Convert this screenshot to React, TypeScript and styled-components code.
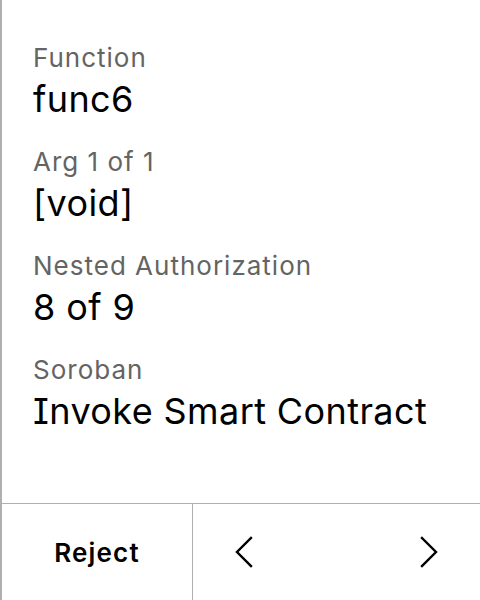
import React from "react";
import styled, { createGlobalStyle } from "styled-components";

const Global = createGlobalStyle`
  html, body { margin: 0; padding: 0; background: #fff; }
  body { font-family: Inter, "Noto Sans", sans-serif; font-feature-settings: "cv08" 1; }
`;

const Screen = styled.div`
  width: 480px;
  height: 600px;
  box-sizing: border-box;
  border-left: 2px solid #b0b0b0;
  display: flex;
  flex-direction: column;
  background: #fff;
`;

const Content = styled.div`
  flex: 1;
  padding: 42px 0 0 31px;
  display: flex;
  flex-direction: column;
`;

const Pair = styled.div`
  display: flex;
  flex-direction: column;
  margin-bottom: 25px;
`;

const Label = styled.div`
  font-size: 26px;
  line-height: 32px;
  letter-spacing: 1px;
  color: #646464;
`;

const Value = styled.div`
  font-size: 36px;
  line-height: 44px;
  letter-spacing: 0.4px;
  color: #000;
  margin-top: 3px;
`;

const Footer = styled.div`
  height: 96px;
  border-top: 1px solid #b0b0b0;
  display: flex;
`;

const RejectButton = styled.div`
  width: 190px;
  border-right: 1px solid #b0b0b0;
  display: flex;
  align-items: center;
  justify-content: center;
  font-size: 26px;
  font-weight: 600;
  letter-spacing: 1.2px;
  color: #000;
`;

const Nav = styled.div`
  flex: 1;
  display: flex;
  align-items: center;
  justify-content: space-between;
  padding: 0 42px;
`;

const Chevron = ({ dir }: { dir: "left" | "right" }) => (
  <svg width="18" height="32" viewBox="0 0 18 32" fill="none">
    <path
      d={dir === "left" ? "M16 2 L2 16 L16 30" : "M2 2 L16 16 L2 30"}
      stroke="#000"
      strokeWidth="2.4"
      strokeLinecap="square"
      strokeLinejoin="miter"
    />
  </svg>
);

const items = [
  ["Function", "func6"],
  ["Arg 1 of 1", "[void]"],
  ["Nested Authorization", "8 of 9"],
  ["Soroban", "Invoke Smart Contract"],
];

export default function App() {
  return (
    <>
      <Global />
      <Screen>
        <Content>
          {items.map(([l, v]) => (
            <Pair key={l}>
              <Label>{l}</Label>
              <Value>{v}</Value>
            </Pair>
          ))}
        </Content>
        <Footer>
          <RejectButton>Reject</RejectButton>
          <Nav>
            <Chevron dir="left" />
            <Chevron dir="right" />
          </Nav>
        </Footer>
      </Screen>
    </>
  );
}
